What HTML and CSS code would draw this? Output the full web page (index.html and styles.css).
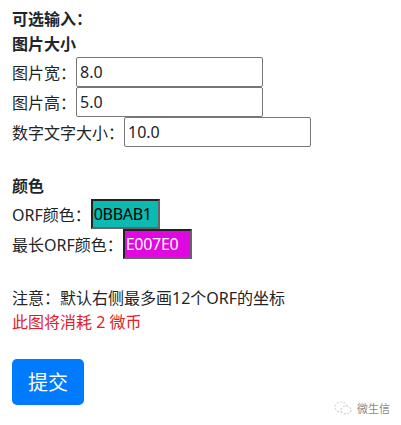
FILE: index.html
```html
<!DOCTYPE html>
<html lang="zh">
<head>
<meta charset="utf-8">
<title>可选输入</title>
<link rel="stylesheet" href="styles.css">
</head>
<body>
<div class="page">
  <div class="heading">可选输入：</div>
  <div class="heading">图片大小</div>
  <div class="row"><span class="label">图片宽：</span><input class="text" type="text" value="8.0"></div>
  <div class="row"><span class="label">图片高：</span><input class="text" type="text" value="5.0"></div>
  <div class="row"><span class="label">数字文字大小：</span><input class="text" type="text" value="10.0"></div>

  <div class="heading section">颜色</div>
  <div class="row"><span class="label">ORF颜色：</span><input class="color teal" type="text" value="0BBAB1"></div>
  <div class="row"><span class="label">最长ORF颜色：</span><input class="color magenta" type="text" value="E007E0"></div>

  <div class="note section">注意：默认右侧最多画12个ORF的坐标</div>
  <div class="note danger">此图将消耗 2 微币</div>

  <button class="submit" type="button">提交</button>
</div>
<div class="watermark">
  <svg width="18" height="14" viewBox="0 0 18 14" aria-hidden="true">
    <ellipse cx="7" cy="6" rx="6" ry="5" fill="none" stroke="#c8c8c8" stroke-width="1" stroke-dasharray="2 1.5"/>
    <ellipse cx="12" cy="9" rx="5" ry="4" fill="#fff" stroke="#c8c8c8" stroke-width="1" stroke-dasharray="2 1.5"/>
  </svg>
  <span>微生信</span>
</div>
</body>
</html>
```

FILE: styles.css
```css
html, body {
  margin: 0;
  padding: 0;
  background: #fff;
}

body {
  font-family: "Noto Sans", "Noto Sans CJK SC", sans-serif;
  font-size: 16px;
  color: #212529;
}

.page {
  padding: 7px 12px 0 12px;
  display: flex;
  flex-direction: column;
  align-items: flex-start;
}

.heading {
  font-weight: bold;
  line-height: 25px;
}

.section {
  margin-top: 27px;
}

.row {
  display: flex;
  align-items: center;
  height: 30px;
}

.label {
  white-space: nowrap;
}

.text {
  box-sizing: border-box;
  width: 187px;
  height: 30px;
  margin: 0;
  padding: 0 3px;
  border: 1px solid #767676;
  border-radius: 2px;
  font-family: "Noto Sans", "Noto Sans CJK SC", sans-serif;
  font-size: 16px;
  color: #212529;
  background: #fff;
}

.color {
  box-sizing: border-box;
  width: 69px;
  height: 30px;
  margin: 0;
  padding: 0 1px;
  border-width: 2px;
  border-style: solid;
  border-color: #222 #666 #666 #222;
  font-family: "Noto Sans", "Noto Sans CJK SC", sans-serif;
  font-size: 16px;
  letter-spacing: -0.3px;
}

.teal {
  background: #0bbab1;
  color: #000;
}

.magenta {
  background: #e007e0;
  color: #fff;
}

.note {
  line-height: 24px;
}

.danger {
  color: #e0202a;
}

.submit {
  margin-top: 25px;
  height: 46px;
  padding: 0 16px;
  border: none;
  border-radius: 5px;
  background: #007bff;
  color: #fff;
  font-family: "Noto Sans CJK SC", sans-serif;
  font-size: 20px;
  line-height: 30px;
}

.watermark {
  position: absolute;
  left: 334px;
  top: 400px;
  display: flex;
  align-items: center;
  gap: 5px;
  font-family: "Noto Sans CJK SC", sans-serif;
  font-size: 11px;
  color: #8a8a8a;
}
```
